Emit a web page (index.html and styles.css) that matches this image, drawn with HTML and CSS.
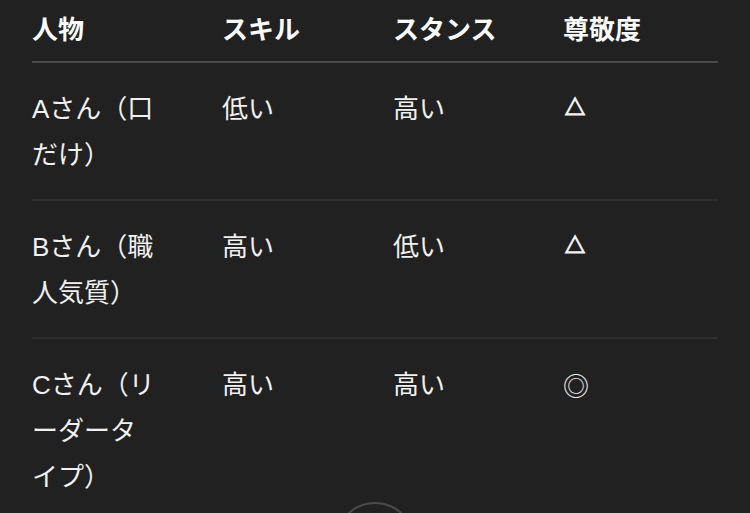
FILE: index.html
```html
<!DOCTYPE html>
<html lang="ja">
<head>
    <meta charset="UTF-8">
    <meta name="viewport" content="width=device-width, initial-scale=1.0">
    <title>人物比較</title>
    <link rel="stylesheet" href="styles.css">
</head>
<body>
    <div class="container">
        <table class="compare">
            <colgroup>
                <col class="col-name">
                <col class="col-skill">
                <col class="col-stance">
                <col class="col-respect">
            </colgroup>
            <thead>
                <tr>
                    <th>人物</th>
                    <th>スキル</th>
                    <th>スタンス</th>
                    <th>尊敬度</th>
                </tr>
            </thead>
            <tbody>
                <tr>
                    <td>Aさん（口だけ）</td>
                    <td>低い</td>
                    <td>高い</td>
                    <td><span class="mark">△</span></td>
                </tr>
                <tr>
                    <td>Bさん（職人気質）</td>
                    <td>高い</td>
                    <td>低い</td>
                    <td><span class="mark">△</span></td>
                </tr>
                <tr>
                    <td>Cさん（リーダータイプ）</td>
                    <td>高い</td>
                    <td>高い</td>
                    <td><span class="circle">◎</span></td>
                </tr>
            </tbody>
        </table>
    </div>

    <!-- scroll to bottom button -->
    <button class="scroll-btn" aria-label="下へスクロール"></button>
</body>
</html>
```

FILE: styles.css
```css
* {
    margin: 0;
    padding: 0;
    box-sizing: border-box;
}

html, body {
    height: 100%;
}

body {
    background: #212121;
    color: #f0f0f0;
    font-family: "Liberation Sans", "Noto Sans CJK JP", sans-serif;
    font-size: 26px;
    line-height: 46px;
    overflow: hidden;
    position: relative;
}

.container {
    padding: 6px 32px 0;
}

.compare {
    width: 686px;
    border-collapse: collapse;
    table-layout: fixed;
}

.col-name { width: 190px; }
.col-skill { width: 171px; }
.col-stance { width: 170px; }
.col-respect { width: 155px; }

th, td {
    text-align: left;
    vertical-align: top;
    padding-right: 16px;
    line-break: loose;
}

th {
    font-weight: 700;
    color: #fafafa;
    padding-top: 1px;
    padding-bottom: 8px;
    border-bottom: 2px solid #4b4b4b;
}

td {
    padding-top: 23px;
    padding-bottom: 21px;
    border-bottom: 2px solid #2e2e2e;
}

td:first-child {
    padding-right: 62px;
}

.mark,
.circle {
    font-family: "Noto Sans CJK JP", sans-serif;
}

.mark {
    display: inline-block;
    font-size: 20px;
    margin-left: 2px;
    -webkit-text-stroke: 1.3px #f0f0f0;
    vertical-align: top;
    position: relative;
    top: -2px;
}

.scroll-btn {
    position: absolute;
    left: 335px;
    top: 502px;
    width: 80px;
    height: 80px;
    border-radius: 50%;
    border: 2px solid #4a4a4a;
    background: #212121;
}
```
